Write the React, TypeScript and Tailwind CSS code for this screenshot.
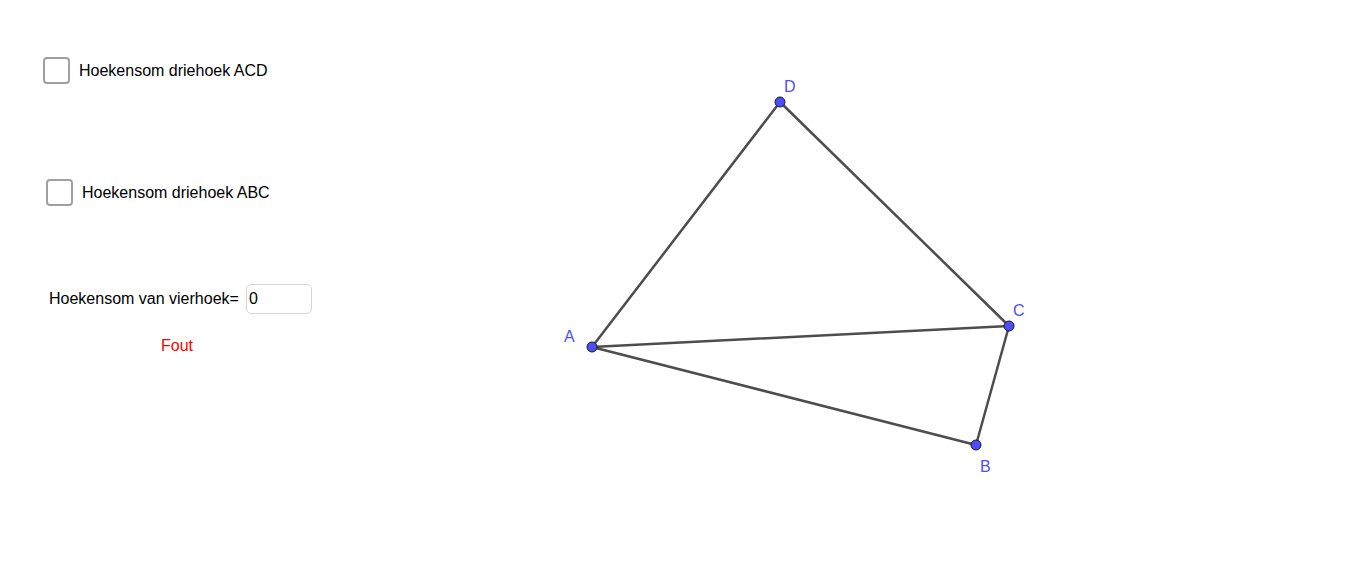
import React from 'react';

const font = { fontFamily: '"Liberation Sans", Arial, sans-serif' };

type Pt = { name: string; x: number; y: number; lx: number; ly: number };

const points: Pt[] = [
  { name: 'A', x: 592, y: 347, lx: 564, ly: 342 },
  { name: 'B', x: 976, y: 445, lx: 980, ly: 472 },
  { name: 'C', x: 1009, y: 326, lx: 1013, ly: 316 },
  { name: 'D', x: 780, y: 102, lx: 784, ly: 92 },
];

const segments: [string, string][] = [
  ['A', 'D'],
  ['D', 'C'],
  ['A', 'C'],
  ['A', 'B'],
  ['B', 'C'],
];

function Checkbox() {
  return (
    <div className="w-[27px] h-[27px] border-2 border-[#a0a0a0] rounded-[4px] bg-white shrink-0" />
  );
}

export default function App() {
  const byName = Object.fromEntries(points.map((p) => [p.name, p]));

  return (
    <div className="w-[1366px] h-[572px] bg-white flex overflow-hidden" style={font}>
      {/* controls */}
      <div className="w-[520px] shrink-0 flex flex-col items-start pt-[57px] text-[16px] text-black">
        <div className="flex items-center gap-[9px] ml-[43px]">
          <Checkbox />
          <span>Hoekensom driehoek ACD</span>
        </div>
        <div className="flex items-center gap-[9px] ml-[46px] mt-[95px]">
          <Checkbox />
          <span>Hoekensom driehoek ABC</span>
        </div>
        <div className="flex items-center gap-[7px] ml-[49px] mt-[78px]">
          <span>Hoekensom van vierhoek=</span>
          <div className="w-[66px] h-[30px] border border-[#d6d6d6] rounded-[5px] flex items-center pl-[2px]">
            0
          </div>
        </div>
        <div className="ml-[161px] mt-[20px] text-[#ff0000]">Fout</div>
      </div>

      {/* geometry canvas */}
      <svg width="846" height="572" viewBox="520 0 846 572" className="shrink-0">
        {segments.map(([a, b]) => (
          <line
            key={a + b}
            x1={byName[a].x}
            y1={byName[a].y}
            x2={byName[b].x}
            y2={byName[b].y}
            stroke="#4d4d4d"
            strokeWidth={2.5}
            strokeLinecap="round"
          />
        ))}
        {points.map((p) => (
          <g key={p.name}>
            <circle cx={p.x} cy={p.y} r={5} fill="#4d4dff" stroke="#1a1a1a" strokeWidth={1} />
            <text x={p.lx} y={p.ly} fill="#4d4dff" fontSize={16} fontFamily='"Liberation Sans", Arial, sans-serif'>
              {p.name}
            </text>
          </g>
        ))}
      </svg>
    </div>
  );
}
